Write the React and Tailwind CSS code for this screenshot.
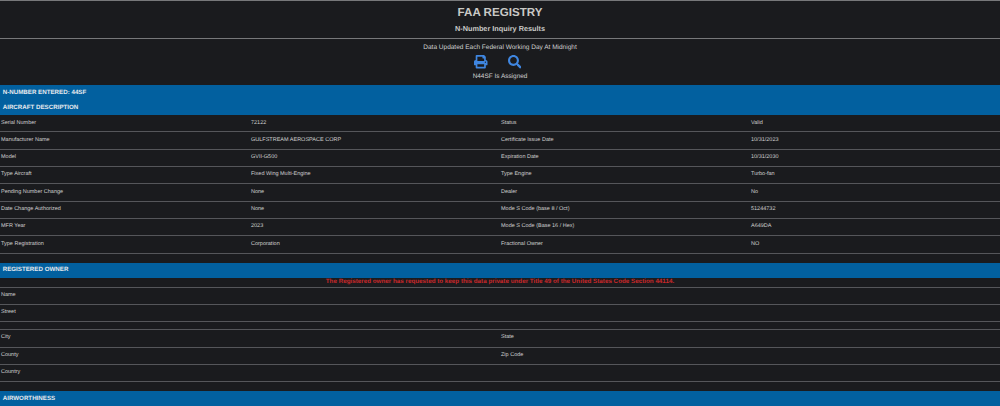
import React from "react";
import { FaPrint, FaSearch } from "react-icons/fa";

const aircraft = [
  ["Serial Number", "72122", "Status", "Valid"],
  ["Manufacturer Name", "GULFSTREAM AEROSPACE CORP", "Certificate Issue Date", "10/31/2023"],
  ["Model", "GVII-G500", "Expiration Date", "10/31/2030"],
  ["Type Aircraft", "Fixed Wing Multi-Engine", "Type Engine", "Turbo-fan"],
  ["Pending Number Change", "None", "Dealer", "No"],
  ["Date Change Authorized", "None", "Mode S Code (base 8 / Oct)", "51244732"],
  ["MFR Year", "2023", "Mode S Code (Base 16 / Hex)", "A649DA"],
  ["Type Registration", "Corporation", "Fractional Owner", "NO"],
];

function Row({ cells, h = "h-[17.3px]" }) {
  return (
    <div className={`grid grid-cols-4 items-center border-b border-[#55565a] ${h}`}>
      {cells.map((c, i) => (
        <div key={i} className="pl-[1px] text-[5.5px] leading-none text-[#cfcfcf] whitespace-nowrap">{c}</div>
      ))}
    </div>
  );
}

function Band({ children, h = "h-[15px]" }) {
  return (
    <div className={`flex items-center pl-[2.7px] font-bold text-[6.2px] text-[#e4e9ee] bg-[#02609f] ${h}`}>{children}</div>
  );
}

export default function App() {
  return (
    <div className="w-[1000px] h-[406px] overflow-hidden bg-[#1a1b1e] font-['Liberation_Sans',Arial,sans-serif] [text-rendering:geometricPrecision]">
      <div className="h-px bg-[#77787a]" />
      <div className="flex flex-col items-center h-[38px] border-b border-[#77787a]">
        <div className="mt-[4px] h-[16px] flex items-center text-[11.6px] font-bold text-[#c9c9c6]">FAA REGISTRY</div>
        <div className="mt-[1.5px] h-[14px] flex items-center text-[7.3px] font-bold text-[#c9c9c6]">N-Number Inquiry Results</div>
      </div>
      <div className="flex flex-col items-center h-[46px]">
        <div className="mt-[4.7px] h-[8px] flex items-center text-[6.5px] text-[#d0d0d0]">Data Updated Each Federal Working Day At Midnight</div>
        <div className="mt-[3.3px] mr-[5px] h-[14px] flex items-center justify-center gap-[20px] text-[#3f86e0]">
          <FaPrint className="w-[13.5px] h-[13.5px]" />
          <FaSearch className="w-[13.5px] h-[13.5px]" />
        </div>
        <div className="mt-[3px] h-[10px] flex items-center text-[6.45px] text-[#d0d0d0]">N44SF Is Assigned</div>
      </div>
      <Band>N-NUMBER ENTERED: 44SF</Band>
      <Band h="h-[14.5px]">AIRCRAFT DESCRIPTION</Band>
      <div className="h-[0.7px]" />
      {aircraft.map((r, i) => <Row key={i} cells={r} />)}
      <div className="h-[9px]" />
      <Band>REGISTERED OWNER</Band>
      <div className="h-[10px] border-b border-[#55565a] flex items-center justify-center text-[6.27px] font-bold text-[#c8282a]">
        The Registered owner has requested to keep this data private under Title 49 of the United States Code Section 44114.
      </div>
      <Row cells={["Name", "", "", ""]} h="h-[17px]" />
      <Row cells={["Street", "", "", ""]} h="h-[17px]" />
      <div className="h-[8px] border-b border-[#55565a]" />
      <Row cells={["City", "", "State", ""]} h="h-[18px]" />
      <Row cells={["County", "", "Zip Code", ""]} h="h-[17px]" />
      <Row cells={["Country", "", "", ""]} h="h-[17px]" />
      <div className="h-[9.2px]" />
      <Band>AIRWORTHINESS</Band>
    </div>
  );
}
